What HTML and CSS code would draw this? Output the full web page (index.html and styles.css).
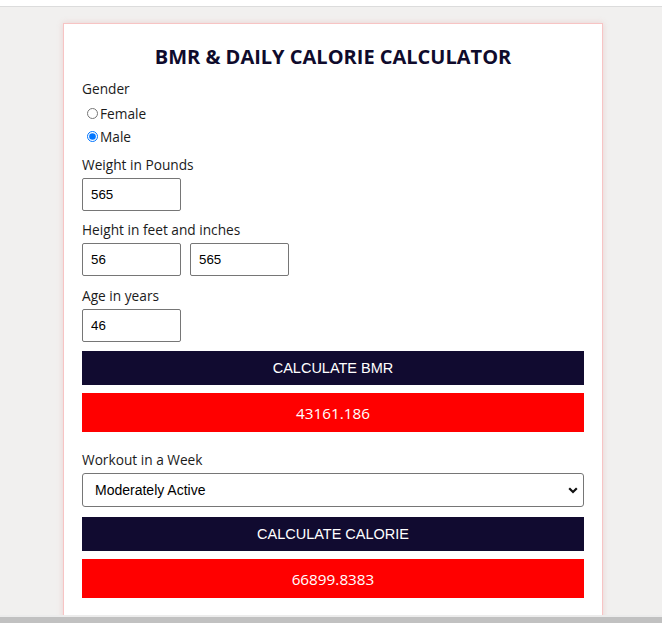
FILE: index.html
```html
<!DOCTYPE html>
<html>
<head>
<meta charset="utf-8">
<link rel="stylesheet" href="styles.css">
</head>
<body>
<div class="topbar"></div>
<main class="stage">
  <section class="card">
    <h1 class="title">BMR &amp; DAILY CALORIE CALCULATOR</h1>
    <div class="group group-gender">
      <div class="label">Gender</div>
      <label class="radio-row"><input type="radio" name="g" class="radio"><span>Female</span></label>
      <label class="radio-row"><input type="radio" name="g" class="radio" checked><span>Male</span></label>
    </div>
    <div class="group group-weight">
      <div class="label">Weight in Pounds</div>
      <input class="field" type="text" value="565">
    </div>
    <div class="group">
      <div class="label">Height in feet and inches</div>
      <div class="pair">
        <input class="field" type="text" value="56">
        <input class="field" type="text" value="565">
      </div>
    </div>
    <div class="group">
      <div class="label">Age in years</div>
      <input class="field" type="text" value="46">
    </div>
    <button class="btn">CALCULATE BMR</button>
    <div class="result">43161.186</div>
    <div class="group workout">
      <div class="label">Workout in a Week</div>
      <div class="select-wrap">
        <select class="select">
          <option>Moderately Active</option>
        </select>
        <svg class="chev" width="10" height="7" viewBox="0 0 10 7"><path d="M1.2 1.3 L5 5 L8.8 1.3" fill="none" stroke="#111" stroke-width="2.2"/></svg>
      </div>
    </div>
    <button class="btn">CALCULATE CALORIE</button>
    <div class="result">66899.8383</div>
  </section>
</main>
<div class="hscroll"></div>
</body>
</html>
```
FILE: styles.css
```css
html, body {
  margin: 0;
  padding: 0;
  height: 623px;
  overflow: hidden;
}
body {
  font-family: "Open Sans", "Noto Sans", sans-serif;
  color: #1b1b1b;
  background: #f1f0ef;
}
.topbar {
  height: 6px;
  background: #fff;
  border-bottom: 1px solid #dcdcdc;
}
.stage {
  height: 608px;
  overflow: hidden;
  background: #f1f0ef;
}
.card {
  margin: 16px 0 0 63px;
  width: 502px;
  padding: 20px 18px 30px;
  background: #fff;
  border: 1px solid #f7c4c4;
  box-shadow: 0 0 6px rgba(220, 120, 120, 0.25);
}
.title {
  margin: 0 0 9px;
  font-size: 20px;
  line-height: 26px;
  font-weight: 700;
  text-align: center;
  color: #0f0b2c;
}
.group {
  margin-bottom: 10px;
}
.group-gender {
  margin-bottom: 11px;
}
.group-weight {
  margin-bottom: 9px;
}
.label {
  font-size: 13.7px;
  line-height: 20px;
  margin-bottom: 3px;
}
.radio-row {
  display: flex;
  align-items: center;
  height: 23px;
  font-size: 13.7px;
}
.radio-row:last-child {
  margin-bottom: -4px;
}
.radio {
  margin: 0 2px 0 5px;
  width: 11px;
  height: 11px;
}
.pair {
  display: flex;
  gap: 9px;
}
.field {
  box-sizing: border-box;
  width: 99px;
  height: 33px;
  padding: 0 8px;
  border: 1px solid #767676;
  border-radius: 2px;
  font-family: "Liberation Sans", Arial, sans-serif;
  font-size: 13.3px;
  color: #000;
  display: block;
}
.btn {
  display: block;
  box-sizing: border-box;
  width: 100%;
  height: 34px;
  margin-top: -1px;
  border: 0;
  background: #110b30;
  color: #fff;
  font-family: "Liberation Sans", Arial, sans-serif;
  font-size: 14.5px;
}
.result {
  margin-top: 8px;
  height: 39px;
  background: #ff0000;
  color: #fff;
  font-size: 15.3px;
  display: flex;
  align-items: center;
  justify-content: center;
}
.workout {
  margin-top: 18px;
  margin-bottom: 11px;
}
.select-wrap {
  position: relative;
}
.select {
  appearance: none;
  -webkit-appearance: none;
  box-sizing: border-box;
  width: 100%;
  height: 34px;
  padding: 0 12px;
  border: 1px solid #767676;
  border-radius: 3px;
  background: #fff;
  font-family: "Liberation Sans", Arial, sans-serif;
  font-size: 14px;
  color: #000;
  display: block;
}
.chev {
  position: absolute;
  right: 6px;
  top: 14px;
  pointer-events: none;
}
.hscroll {
  height: 6px;
  background: #c1c1c1;
  border-top: 2px solid #ececec;
}
```
